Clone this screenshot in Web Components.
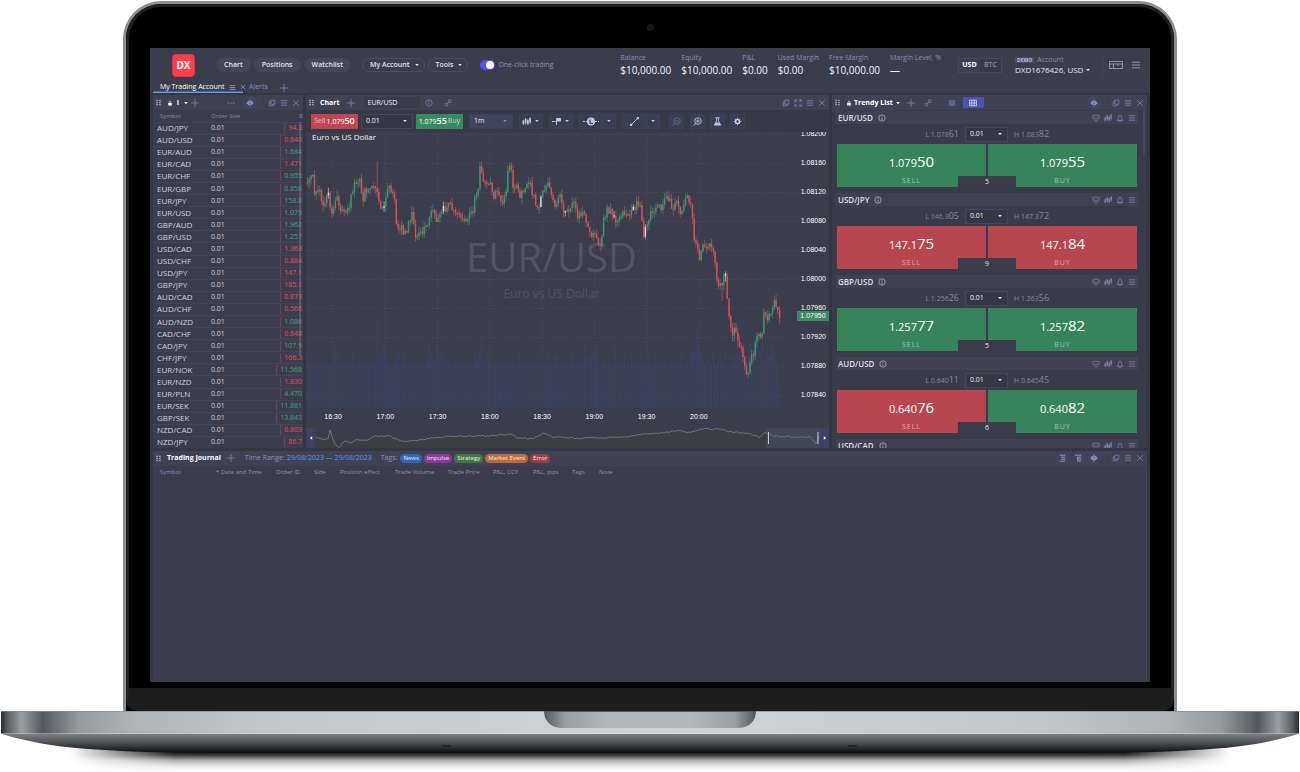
<!DOCTYPE html>
<html lang="en">
<head>
<meta charset="utf-8">
<title>Trading terminal</title>
<style>
  body { margin: 0; background: #fff; font-family: "Open Sans", "Noto Sans", sans-serif; }
</style>
</head>
<body>
<laptop-frame>
  <top-bar></top-bar>
  <work-tabs></work-tabs>
  <work-space>
    <watch-list></watch-list>
    <price-chart></price-chart>
    <trendy-list></trendy-list>
  </work-space>
  <trading-journal></trading-journal>
</laptop-frame>

<script>
const BASE = `
  *, *::before, *::after { box-sizing: border-box; }
  :host { font: 7px/10px "Open Sans", "Noto Sans", sans-serif; color: #e4e4ec; }
  button, select, input { font: inherit; color: inherit; margin: 0; padding: 0; border: 0; background: none; border-radius: 0; appearance: none; }
  button { display: inline-flex; align-items: center; justify-content: center; white-space: nowrap; cursor: pointer; }
  a { color: inherit; text-decoration: none; }
`;
const define = (name, html, setup) => {
  const tpl = document.createElement('template');
  customElements.define(name, class extends HTMLElement {
    connectedCallback() {
      if (this.shadowRoot) return;
      const root = this.attachShadow({ mode: 'open' });
      tpl.innerHTML = `<style>${BASE}</style>` + (typeof html === 'function' ? html(this) : html);
      root.append(tpl.content.cloneNode(true));
      if (setup) setup(root, this);
    }
  });
};

/* ---------- icons ---------- */
const ICONS = {
  grip: '<g fill="currentColor" stroke="none"><path d="M2 1h2v2H2zM6 1h2v2H6zM2 4h2v2H2zM6 4h2v2H6zM2 7h2v2H2zM6 7h2v2H6z"/></g>',
  lock: '<path fill="currentColor" stroke="none" d="M2 5h6v4H2z"/><path d="M3.5 5V3.5a1.5 1.5 0 0 1 3 0V5"/>',
  down: '<path fill="currentColor" stroke="none" d="M2 3.5h6L5 7z"/>',
  plus: '<path d="M5 0v10M0 5h10"/>',
  dots: '<path fill="currentColor" stroke="none" d="M1 4.5h1.5V6H1zM4.2 4.5h1.5V6H4.2zM7.5 4.5H9V6H7.5z"/>',
  eye: '<path fill="currentColor" fill-opacity=".4" d="M1 5 3.500 2.500v5zM9 5 6.500 2.500v5z"/><path d="M5 .5v9"/>',
  copy: '<path d="M3.500 1.500h5v5h-5zM3.500 3.500h-2v5h5v-2"/>',
  menu: '<path d="M1 2.200h8M1 5h8M1 7.800h8"/>',
  close: '<path d="M1.500 1.500l7 7M8.500 1.500l-7 7"/>',
  info: '<circle cx="5" cy="5" r="4"/><path d="M5 4.500V7.500M5 2.500v1"/>',
  link: '<circle cx="3" cy="7" r="1.800"/><circle cx="7.200" cy="2.800" r="1.800"/><path d="M4 6l2-2"/>',
  expand: '<path d="M1 4V1h3M6 1h3v3M9 6v3H6M4 9H1V6M1 1l2.500 2.500M9 1 6.500 3.500M9 9 6.500 6.500M1 9l2.500-2.500"/>',
  list: '<path d="M1 2.500h8M1 5h8M1 7.500h8"/>',
  grid: '<path d="M.5 1.500h9v7h-9zM.5 5h9M3.500 1.500v7M6.500 1.500v7"/>',
  candles: '<path stroke-width="1.800" d="M1.500 4v4M4 2v5M6.500 3v5M9 1v5"/><path stroke-width=".6" d="M1.500 3v6M4 1v8M6.500 2v7M9 0v8"/>',
  chartType: '<path d="M0 5h4M5 2v7"/><path fill="currentColor" stroke="none" d="M5 1h5v4H5z"/>',
  line: '<path d="M1.500 8.500l7-7"/><path fill="currentColor" stroke="none" d="M0 7.500h2.500V10H0zM7.500 0H10v2.500H7.500z"/>',
  zoomOut: '<circle cx="5.500" cy="4.500" r="3.600"/><path d="M3.500 4.500h4M3 7.200.8 9.500"/>',
  zoomIn: '<circle cx="5.500" cy="4.500" r="3.600"/><path d="M3.500 4.500h4M5.500 2.500v4M3 7.200.8 9.500"/>',
  flask: '<path d="M2.500 .8h5M4 1v3L1.500 9h7L6 4V1"/><path fill="currentColor" stroke="none" d="M3 6.200h4l1.300 2.600H1.700z"/>',
  gear: '<circle cx="5" cy="5" r="2.200" stroke-width="1.800"/><path d="M5 .8v1.500M5 7.700v1.500M.8 5h1.500M7.700 5h1.500M2 2l1 1M7 7l1 1M8 2 7 3M3 7 2 8"/>',
  shield: '<path d="M1 2.200c1.500 0 2.500-.3 4-1.200 1.500.9 2.500 1.200 4 1.200C9 5.500 7.500 8 5 9.200 2.500 8 1 5.500 1 2.200zM3.200 4.500 5 6.300l1.800-1.800"/>',
  bell: '<path d="M1 8h8M2.200 8C3.200 6.500 2.500 1.200 5 1.200S6.800 6.500 7.800 8M4 9.500h2"/>',
  card: '<path d="M.5 1.500h13v7H.5zM.5 4h13M4.500 4v4.500M9 4v2"/>',
  treeA: '<path d="M2 1.500h7M4 4h5M4 6.500h5M2 9h7"/>',
  treeB: '<path d="M1 1.500h8M4 4h5M5 6.500h4M5 9h4M4.500 4v5"/>',
  left: '<path fill="currentColor" stroke="none" d="M7 2v6L3 5z"/>',
  right: '<path fill="currentColor" stroke="none" d="M3 2v6l4-3z"/>'
};
define('ui-icon', el => `
  <style>
    :host { display: inline-flex; flex: none; width: var(--size, 8px); height: var(--size, 8px); color: inherit; }
    :host([name=card]) { width: 14px; height: 10px; }
    svg { width: 100%; height: 100%; display: block; }
  </style>
  <svg viewBox="0 0 ${el.getAttribute('name') === 'card' ? 14 : 10} 10" fill="none" stroke="currentColor" aria-hidden="true">${ICONS[el.getAttribute('name')]}</svg>`);

/* ---------- drop-down ---------- */
define('drop-down', el => `
  <style>
    :host { display: inline-flex; position: relative; height: 15px; }
    select { width: 100%; height: 100%; padding: 0 4px; border: 1px solid var(--edge, #45475e); background: var(--fill, #353744); color: #f0f0f5; }
    ui-icon { position: absolute; right: 5px; top: 50%; margin-top: -3px; --size: 6px; pointer-events: none; }
  </style>
  <select aria-label="${el.getAttribute('label')}"><option>${el.getAttribute('value')}</option></select>
  <ui-icon name="down"></ui-icon>`);

/* ---------- laptop ---------- */
define('laptop-frame', `
  <style>
    :host { display: flex; flex-direction: column; height: 100vh; min-height: 640px; overflow: hidden; }
    .lid { flex: 1; min-height: 0; display: flex; flex-direction: column; width: calc(100% - 246px); margin: 1px auto 0; border: 3px solid #8b8f92; border-bottom: 0; border-radius: 38px 38px 0 0; background: #000; }
    .bezel { flex: 1; min-height: 0; display: flex; flex-direction: column; border: 3px solid #1f2122; border-bottom: 0; border-radius: 35px 35px 12px 12px; overflow: hidden; }
    .camera { flex: none; height: 41px; display: grid; place-items: center; }
    .camera i { width: 7px; height: 7px; border-radius: 50%; background: #17181b; border: 1px solid #1d1e20; }
    .screen { flex: 1; min-height: 0; margin: 0 21px; display: flex; flex-direction: column; background: #3b3d4d; overflow: hidden; }
    .chin { flex: none; height: 29px; border-top: 6px solid #000; background: #1d1d1d; }
    .deck { flex: none; display: block; width: 100%; height: 61px; }
  </style>
  <div class="lid"><div class="bezel">
    <div class="camera"><i></i></div>
    <main class="screen"><slot></slot></main>
    <div class="chin"></div>
  </div></div>
  <svg class="deck" viewBox="0 0 1300 61" preserveAspectRatio="none" aria-hidden="true">
    <defs>
      <linearGradient id="side"><stop offset="0" stop-color="#2a2d30"/><stop offset=".005" stop-color="#5a5e61"/><stop offset=".016" stop-color="#9b9fa2"/><stop offset=".032" stop-color="#54585c"/><stop offset=".06" stop-color="#979a9d"/><stop offset=".1" stop-color="#b0b3b6"/><stop offset=".2" stop-color="#c3c7ca"/><stop offset=".5" stop-color="#d0d4d7"/><stop offset=".8" stop-color="#c3c7ca"/><stop offset=".9" stop-color="#b0b3b6"/><stop offset=".94" stop-color="#979a9d"/><stop offset=".968" stop-color="#54585c"/><stop offset=".984" stop-color="#9b9fa2"/><stop offset=".995" stop-color="#5a5e61"/><stop offset="1" stop-color="#2a2d30"/></linearGradient>
      <linearGradient id="under" x2="0" y2="1"><stop offset="0" stop-color="#7b8083"/><stop offset=".4" stop-color="#55595c"/><stop offset=".8" stop-color="#222426"/><stop offset="1" stop-color="#0a0a0a"/></linearGradient>
      <linearGradient id="shade" x2="0" y2="1"><stop offset="0" stop-color="#000"/><stop offset=".25" stop-color="#000" stop-opacity=".8"/><stop offset=".5" stop-color="#000" stop-opacity=".3"/><stop offset=".75" stop-color="#000" stop-opacity=".08"/><stop offset="1" stop-color="#000" stop-opacity="0"/></linearGradient>
      <linearGradient id="fade"><stop offset="0" stop-color="#000"/><stop offset=".09" stop-color="#fff"/><stop offset=".91" stop-color="#fff"/><stop offset="1" stop-color="#000"/></linearGradient>
      <mask id="m"><rect x="70" y="38" width="1160" height="23" fill="url(#fade)"/></mask>
      <linearGradient id="notch"><stop offset="0" stop-color="#55585b"/><stop offset=".1" stop-color="#9b9ea1"/><stop offset=".3" stop-color="#b4b7ba"/><stop offset=".7" stop-color="#b4b7ba"/><stop offset=".9" stop-color="#9b9ea1"/><stop offset="1" stop-color="#55585b"/></linearGradient>
    </defs>
    <rect x="70" y="38" width="1160" height="23" fill="url(#shade)" mask="url(#m)"/>
    <path d="M2 23H1298C1272 31 1240 37 1195 39C1150 42 1100 42 1040 42H260C200 42 150 42 105 39C60 37 28 31 2 23z" fill="url(#under)"/>
    <rect x="1" y="0" width="1298" height="23" fill="url(#side)"/>
    <path d="M1 22.500H1299" stroke="#d5d9dc" stroke-opacity=".45"/>
    <path d="M1 .5H1299" stroke="#8a8d90" stroke-opacity=".7"/>
    <path d="M544 0H756C756 10 749 17 738 17H562C551 17 544 10 544 0z" fill="url(#notch)"/>
    <path d="M544 .5H756" stroke="#55585b"/>
    <path d="M442 35h9M848 35h9" stroke="#1d1f20" stroke-width="2" opacity=".7"/>
  </svg>`);

/* ---------- top bar ---------- */
define('account-stat', el => `
  <style>
    :host { display: flex; flex-direction: column; flex: none; white-space: nowrap; }
    dt, dd { margin: 0; } dl { margin: 0; }
    dt { color: #8c8cb8; }
    dd { font-size: 10px; line-height: 15px; color: #f4f4f8; }
  </style>
  <dl><dt>${el.getAttribute('label')}</dt><dd>${el.getAttribute('value')}</dd></dl>`);

define('top-bar', `
  <style>
    :host { flex: none; display: flex; align-items: center; height: 34px; padding: 0 9px 0 22px; white-space: nowrap; }
    .logo { width: 23px; height: 23px; border-radius: 4px; background: #fb3f4c; border: 1px solid #dc3543; font-size: 10px; font-weight: 700; color: #fff; display: grid; place-items: center; margin-right: 21px; }
    nav { display: flex; gap: 3px; margin-right: 11px; }
    nav a { height: 14px; line-height: 13px; padding: 0 8px; border-radius: 7px; background: #44465a; font-weight: 600; }
    .menus { display: flex; gap: 3px; margin-right: 12px; }
    .menus button { height: 14px; padding: 0 4px 0 7px; gap: 4px; border: 1px solid #4c4e63; border-radius: 7px; font-weight: 600; --size: 6px; }
    label { display: flex; align-items: center; gap: 3px; color: #9090bc; }
    label input { width: 15px; height: 10px; border-radius: 5px; background: #5058ee; display: flex; align-items: center; justify-content: flex-end; padding: 0 1px; }
    label input::before { content: ""; width: 8px; height: 8px; border-radius: 50%; background: #fff; }
    .stats { display: flex; gap: 10px; margin-left: auto; margin-right: 17px; }
    .ccy { display: flex; border: 1px solid #454864; height: 15px; }
    .ccy button { width: 21px; background: #373946; color: #8888b8; font-weight: 600; }
    .ccy button:first-child { background: #3d3f50; color: #fff; font-weight: 700; }
    .account { margin-left: 13px; width: 88px; border-right: 1px solid #434558; }
    .account div { display: flex; align-items: center; gap: 3px; color: #8c8cb8; }
    .account b { font-size: 5px; line-height: 6px; padding: 0 2px; background: #4b4e70; color: #b9bbe0; }
    .account button { font-size: 8px; gap: 2px; --size: 6px; line-height: 10px; }
    .end { display: flex; gap: 8px; margin-left: 6px; color: #8c8cb4; --size: 10px; }
  </style>
  <a class="logo" href="#home">DX</a>
  <nav><a href="#chart">Chart</a><a href="#positions">Positions</a><a href="#watchlist">Watchlist</a></nav>
  <div class="menus"><button>My Account <ui-icon name="down"></ui-icon></button><button>Tools <ui-icon name="down"></ui-icon></button></div>
  <label><input type="checkbox" checked>One-click trading</label>
  <div class="stats">
    <account-stat label="Balance" value="$10,000.00"></account-stat>
    <account-stat label="Equity" value="$10,000.00"></account-stat>
    <account-stat label="P&amp;L" value="$0.00"></account-stat>
    <account-stat label="Used Margin" value="$0.00"></account-stat>
    <account-stat label="Free Margin" value="$10,000.00"></account-stat>
    <account-stat label="Margin Level, %" value="—"></account-stat>
  </div>
  <div class="ccy"><button>USD</button><button>BTC</button></div>
  <div class="account"><div><b>DEMO</b>Account</div><button>DXD1676426, USD <ui-icon name="down"></ui-icon></button></div>
  <div class="end"><button aria-label="Layouts"><ui-icon name="card"></ui-icon></button><button aria-label="Menu"><ui-icon name="menu"></ui-icon></button></div>`);

define('work-tabs', `
  <style>
    :host { flex: none; display: flex; height: 11px; padding-left: 3px; color: #8c8cc0; white-space: nowrap; }
    .on { display: flex; align-items: center; gap: 4px; width: 90px; padding-left: 7px; border-bottom: 1px solid #5a9ff0; box-shadow: inset 0 -1px #47699f; }
    .on a { color: #fff; } .on button { color: #a5a5c8; --size: 7px; } .on button + button { --size: 6px; }
    .off { margin: 0 12px 0 6px; }
  </style>
  <div class="on"><a href="#account">My Trading Account</a><button aria-label="Tab menu"><ui-icon name="menu"></ui-icon></button><button aria-label="Close tab"><ui-icon name="close"></ui-icon></button></div>
  <a class="off" href="#alerts">Alerts</a><button aria-label="Add tab"><ui-icon name="plus"></ui-icon></button>`);

define('work-space', `
  <style>
    :host { flex: 356 1 0; min-height: 0; display: grid; grid-template-columns: 150px minmax(0, 1fr) 315px; grid-template-rows: minmax(0, 1fr); gap: 3px; padding: 2px 3px 0; background: #343643; }
  </style><slot></slot>`);

/* ---------- panel with header bar ---------- */
define('panel-frame', `
  <style>
    :host { display: flex; flex-direction: column; min-width: 0; min-height: 0; height: 100%; background: #3b3d4d; overflow: hidden; }
    header { flex: none; display: flex; align-items: center; height: 15px; background: #404253; padding: 0 3px 0 1px; color: #8080ac; white-space: nowrap; }
    .body { flex: 1; min-height: 0; display: flex; flex-direction: column; }
    .grip { display: inline-flex; color: #b8b8c8; margin: 0 5px 0 1px; --size: 7px; }
    .tools { display: flex; margin-left: auto; align-items: center; }
    .win { display: flex; gap: 4px; padding-left: 4px; border-left: 1px solid #393b49; }
  </style>
  <header><span class="grip"><ui-icon name="grip"></ui-icon></span><slot name="lead"></slot>
    <div class="tools"><slot name="tools"></slot><div class="win"><button aria-label="Detach"><ui-icon name="copy"></ui-icon></button><slot name="win"></slot><button aria-label="Panel menu"><ui-icon name="menu"></ui-icon></button><button aria-label="Close panel"><ui-icon name="close"></ui-icon></button></div></div>
  </header>
  <div class="body"><slot></slot></div>`);
const LEAD = `
  .lead { display: flex; align-items: center; height: 15px; }
  .title { color: #fff; font-weight: 700; gap: 2px; --size: 6px; }
  .eye { width: 12px; height: 11px; background: #41456a80; color: #a8a8d0; }
`;

/* ---------- watch list ---------- */
const QUOTES = `AUD/JPY 94.3 d,AUD/USD 0.640 d,EUR/AUD 1.684 u,EUR/CAD 1.471 d,EUR/CHF 0.955 u,EUR/GBP 0.858 u,EUR/JPY 158.8 u,EUR/USD 1.079 u,GBP/AUD 1.962 u,GBP/USD 1.257 u,USD/CAD 1.363 d,USD/CHF 0.884 d,USD/JPY 147.1 d,GBP/JPY 185.1 d,AUD/CAD 0.873 d,AUD/CHF 0.566 d,AUD/NZD 1.086 u,CAD/CHF 0.648 d,CAD/JPY 107.9 u,CHF/JPY 166.3 d,EUR/NOK 11.568 u,EUR/NZD 1.830 d,EUR/PLN 4.470 u,EUR/SEK 11.881 u,GBP/SEK 13.843 u,NZD/CAD 0.803 d,NZD/JPY 86.7 d`.split(',').map(r => r.split(' '));
define('watch-list', () => `
  <style>
    ${LEAD}
    :host { min-width: 0; min-height: 0; }
    .wrap { flex: 1; min-height: 0; position: relative; }
    table { width: 100%; height: 100%; border-collapse: collapse; table-layout: fixed; }
    th { height: 12px; padding: 0; font-size: 6px; font-weight: 400; text-align: left; color: #8484b4; }
    td { padding: 0; line-height: 10px; border-top: 1px solid #434556; color: #d0d0d8; }
    td:first-child, th:first-child { width: 58px; }
    td:first-child { padding-left: 4px; font-size: 8px; } th:first-child { padding-left: 7px; }
    td:last-child, th:last-child { width: 34px; text-align: right; }
    td span { display: block; width: fit-content; margin-left: auto; line-height: 10px; border-left: 1px solid #6a4356; box-shadow: inset 0 0 0 1px #50405080; padding: 0 1px 0 3px; }
    .u { color: #41a37d; } .d { color: #e0505c; }
    .bar { position: absolute; right: 2px; top: 12px; width: 2px; height: 69%; background: #8084a0; opacity: .4; }
  </style>
  <panel-frame>
    <div slot="lead" class="lead"><button class="title"><ui-icon name="lock"></ui-icon>&nbsp;I&nbsp;<ui-icon name="down"></ui-icon></button><button aria-label="Add symbol" style="margin-left:2px"><ui-icon name="plus"></ui-icon></button></div>
    <div slot="tools" class="lead" style="gap:9px;margin-right:7px"><button aria-label="More"><ui-icon name="dots"></ui-icon></button><button class="eye" aria-label="Columns"><ui-icon name="eye"></ui-icon></button></div>
    <div class="wrap">
      <table><thead><tr><th>Symbol</th><th>Order Size</th><th>B</th></tr></thead>
      <tbody>${QUOTES.map(([s, p, c]) => `<tr><td>${s}</td><td>0.01</td><td><span class="${c}">${p}</span></td></tr>`).join('')}</tbody></table>
      <div class="bar"></div>
    </div>
  </panel-frame>`);

/* ---------- price chart ---------- */
const PATH = [[1,50],[5,43],[7,47],[9,63],[14,55],[17,76],[22,56],[25,80],[31,66],[35,81],[42,78],[45,65],[49,50],[53,45],[57,71],[59,55],[62,61],[67,53],[71,61],[75,78],[79,75],[82,56],[88,58],[91,98],[96,96],[98,105],[106,81],[109,105],[114,103],[121,96],[126,76],[131,91],[136,75],[139,77],[144,73],[151,81],[161,88],[164,78],[168,76],[169,63],[172,62],[174,36],[177,50],[184,48],[187,70],[191,55],[194,70],[199,65],[202,41],[205,31],[207,55],[211,51],[213,66],[219,58],[224,50],[231,78],[237,61],[242,53],[248,75],[254,65],[259,81],[269,70],[271,85],[277,80],[286,108],[288,98],[295,115],[298,85],[302,78],[306,81],[312,90],[316,78],[321,85],[333,70],[336,85],[338,104],[344,83],[352,70],[355,80],[361,63],[366,75],[371,70],[374,81],[381,66],[385,70],[388,105],[393,126],[397,115],[404,110],[409,128],[411,150],[415,153],[419,141],[422,175],[427,208],[429,195],[434,215],[437,225],[441,246],[443,231],[448,221],[452,198],[455,211],[458,181],[462,188],[469,170],[473,183]];
const rnd = n => { const v = Math.sin(n * 127.1 + 11.7) * 43758.5453; return v - Math.floor(v); };
const at = x => {
  for (let i = 1; i < PATH.length; i++) if (x <= PATH[i][0]) {
    const [a, b] = PATH[i - 1], [c, d] = PATH[i];
    return b + (d - b) * (x - a) / (c - a);
  }
  return PATH[PATH.length - 1][1];
};
const f = n => n.toFixed(1);
const COL = { u: '#3a9a6c', d: '#d8505a', w: '#d5d5dc' };
function candles() {
  const step = 1.742, d = { u: ['', ''], d: ['', ''], w: ['', ''] };
  let open = at(1), out = '', vol = '';
  for (let i = 0; i < 272; i++) {
    const x = 1.5 + i * step;
    let close = at(x) + (rnd(i) - .5) * 8;
    const k = rnd(i + 900) > .955 ? 'w' : close < open ? 'u' : 'd';
    let top = Math.min(open, close), bot = Math.max(open, close);
    if (bot - top < 1.5) bot = top + 1.5;
    let hi = top - rnd(i + 300) * 6, lo = bot + rnd(i + 600) * 6;
    if (i === 40) hi = 29;
    if (i === 238) lo = 169;
    d[k][0] += `M${f(x)} ${f(top)}V${f(bot)}`;
    d[k][1] += `M${f(x)} ${f(hi)}V${f(lo)}`;
    open = close;
    let h = 42 + rnd(i + 77) * rnd(i + 33) * 24;
    for (const [c, a, w] of [[76, 16, 8], [131, 18, 10], [176, 16, 8], [286, 16, 6], [391, 26, 8], [450, 22, 28]]) h += a * Math.max(0, 1 - Math.abs(x - c) / w) * (.5 + rnd(i + 5) / 2);
    if (i === 40) h = 91;
    if (i > 269) h = 21;
    vol += `M${f(x)} 276V${f(276 - h)}`;
  }
  for (const k in d) out += `<path d="${d[k][1]}" stroke="${COL[k]}" stroke-width=".8" opacity=".8"/><path d="${d[k][0]}" stroke="${COL[k]}" stroke-width="1.4"/>`;
  return `<path d="${vol}" stroke="#3d4364" stroke-width="1.200" opacity=".75"/>` + out;
}
function gridLines() {
  let s = '';
  for (let y = 2; y < 276; y += 29) s += `M0 ${y}.5H491`;
  for (let i = 0; i < 8; i++) s += `M${f(27.2 + i * 52.25)} 2V276`;
  return `<path d="${s}" stroke="#4b4d5e" stroke-dasharray="1 2" stroke-width="1"/>`;
}
const MINI = [[0,8],[6,10],[13,10],[15,1],[17,7],[20,15],[24,19],[27,15],[30,12],[35,14],[40,11],[52,11],[61,7],[75,7],[85,12],[98,12],[118,9],[142,7],[172,7],[195,5],[203,9],[218,10],[229,4],[238,8],[250,8],[265,10],[270,8],[285,9],[312,8],[325,5],[335,5],[352,3],[362,2],[375,3],[388,0],[405,0],[412,2],[425,4],[435,5],[445,8],[450,3],[458,7],[478,8],[495,8],[501,15],[504,7]];
function mini() {
  let p = '';
  for (let i = 1; i < MINI.length; i++) {
    const [a, b] = MINI[i - 1], [c, e] = MINI[i];
    for (let x = a; x < c; x += 2) p += `L${x} ${f(b + (e - b) * (x - a) / (c - a) + (rnd(x + 40) - .5) * 1.4 + 1)}`;
  }
  return `<path d="M0 20${p}L504 8V20z" fill="#3b3e42"/><path d="M${p.slice(1)}L504 8" stroke="#7c8078" stroke-width=".8" fill="none"/>`;
}
define('price-chart', () => `
  <style>
    ${LEAD}
    :host { min-width: 0; min-height: 0; }
    .sym { width: 56px; height: 11px; padding: 0 3px; border: 1px solid #383a48; background: #3a3c4b; color: #f0f0f4; }
    .bar { flex: none; display: flex; align-items: center; height: 22px; padding-left: 5px; background: #373946; white-space: nowrap; }
    .bar button { height: 15px; background: #40446080; border: 1px solid #3c4058; color: #c4c6dc; --size: 9px; }
    .bar button.sell, .bar button.buy { width: 47px; border: 0; color: #fff; gap: 1px; }
    .bar button.sell { background: #be4652; } .bar button.buy { background: #388a61; }
    .sell small, .buy small { font-size: 7px; opacity: .65; }
    .num { display: inline-flex; align-items: baseline; } .num b { font-size: 9px; font-weight: 600; } 
    .dd { --size: 6px; display: inline-flex; margin-left: 3px; }
    .plot { flex: 1; min-height: 0; display: grid; grid-template-columns: minmax(0, 1fr) 32px; grid-template-rows: minmax(0, 1fr) 20px 20px; position: relative; overflow: hidden; }
    svg { display: block; width: 100%; height: 100%; }
    .canvas { position: relative; min-height: 0; }
    .name { position: absolute; left: 6px; top: 0; font-size: 8px; color: #f2f2f6; }
    .mark { position: absolute; inset: 0; display: flex; flex-direction: column; align-items: center; padding-top: 98px; color: #525465; white-space: nowrap; }
    .mark b { font-size: 40px; line-height: 54px; font-weight: 400; } .mark span { font-size: 12px; line-height: 16px; margin-top: 2px; }
    .prices { grid-row: 1 / 3; grid-column: 2; min-height: 0; font: 7px/10px "Liberation Sans", Arial, sans-serif; color: #fff; text-align: right; padding-right: 3px; margin-top: -3px; }
    .prices div { height: 29px; white-space: nowrap; }
    .now { position: absolute; right: 0; top: 179px; width: 32px; height: 10px; background: #388a61; color: #fff; font: 7px/10px "Liberation Sans", Arial, sans-serif; text-align: center; }
    .times { grid-row: 2; grid-column: 1; display: flex; padding: 4px 72px 0 1px; font: 7px/10px "Liberation Sans", Arial, sans-serif; color: #fff; }
    .times span { flex: 1; text-align: center; }
    .nav { grid-row: 3; grid-column: 1 / -1; display: flex; height: 20px; }
    .nav button { width: 9px; background: #3d4262; color: #fff; --size: 6px; }
    .nav div { flex: 1; min-width: 0; }
  </style>
  <panel-frame>
    <div slot="lead" class="lead"><b class="title" style="margin-right:7px">Chart</b><button aria-label="Add chart"><ui-icon name="plus"></ui-icon></button><input class="sym" aria-label="Symbol" value="EUR/USD" style="margin:0 5px 0 9px"><button aria-label="Info" style="margin-right:11px"><ui-icon name="info"></ui-icon></button><button aria-label="Link"><ui-icon name="link"></ui-icon></button></div>
    <button slot="win" aria-label="Full screen"><ui-icon name="expand"></ui-icon></button>
    <div class="bar">
      <button class="sell"><small>Sell</small> <span class="num">1.079<b>50</b></span></button>
      <drop-down label="Order size" value="0.01" style="width:52px;margin:0 3px"></drop-down>
      <button class="buy"><span class="num">1.079<b>55</b></span> <small>Buy</small></button>
      <drop-down label="Interval" value="1m" style="width:44px;margin:0 6px;--fill:#40445f;--edge:#3c4058;color:#8284a0"></drop-down>
      <button style="width:24px" aria-label="Chart type"><ui-icon name="candles"></ui-icon><span class="dd"><ui-icon name="down"></ui-icon></span></button>
      <button style="width:24px;margin-left:6px" aria-label="Scale"><ui-icon name="chartType"></ui-icon><span class="dd"><ui-icon name="down"></ui-icon></span></button>
      <button style="width:23px;margin-left:6px" aria-label="Levels"><svg style="width:16px;height:9px" viewBox="0 0 16 9" fill="none"><path d="M0 4.500h16" stroke="currentColor" stroke-dasharray="2 1"/><circle cx="8" cy="4.500" r="4" fill="currentColor"/><path d="M7 2.500v4h3" stroke="#40445f" stroke-width="1.200"/></svg></button>
      <button style="width:14px" aria-label="Level options"><span style="--size:6px;display:flex"><ui-icon name="down"></ui-icon></span></button>
      <button style="width:24px;margin-left:6px" aria-label="Draw line"><ui-icon name="line"></ui-icon></button>
      <button style="width:14px" aria-label="Drawing options"><span style="--size:6px;display:flex"><ui-icon name="down"></ui-icon></span></button>
      <button style="width:15px;margin-left:9px;color:#686a8a" aria-label="Zoom out"><ui-icon name="zoomOut"></ui-icon></button>
      <button style="width:15px;margin-left:6px" aria-label="Zoom in"><ui-icon name="zoomIn"></ui-icon></button>
      <button style="width:15px;margin-left:5px" aria-label="Studies"><ui-icon name="flask"></ui-icon></button>
      <button style="width:15px;margin-left:5px" aria-label="Settings"><ui-icon name="gear"></ui-icon></button>
    </div>
    <div class="plot">
      <div class="canvas">
        <div class="mark"><b>EUR/USD</b><span>Euro vs US Dollar</span></div>
        <svg style="position:relative" viewBox="0 0 491 276" preserveAspectRatio="none" fill="none" aria-hidden="true">${gridLines()}${candles()}</svg>
        <div class="name">Euro vs US Dollar</div>
      </div>
      <div class="prices">${['1.08200','1.08160','1.08120','1.08080','1.08040','1.08000','1.07960','1.07920','1.07880','1.07840'].map(p => `<div>${p}</div>`).join('')}</div>
      <div class="times">${['16:30','17:00','17:30','18:00','18:30','19:00','19:30','20:00'].map(t => `<span>${t}</span>`).join('')}</div>
      <div class="now">1.07950</div>
      <div class="nav">
        <button aria-label="Scroll left"><ui-icon name="left"></ui-icon></button>
        <div><svg viewBox="0 0 505 20" preserveAspectRatio="none" aria-hidden="true">${mini()}<rect x="451" width="54" height="20" fill="#5a649a" opacity=".22"/><path d="M453.500 4v12M503 4v12" stroke="#c8c8d8"/></svg></div>
        <button aria-label="Scroll right"><ui-icon name="right"></ui-icon></button>
      </div>
    </div>
  </panel-frame>`);

/* ---------- quote tiles ---------- */
const split = (v, n = 2) => `${v.slice(0, -n)}<b>${v.slice(-n)}</b>`;
define('price-tile', el => {
  const a = n => el.getAttribute(n) || '';
  return `
  <style>
    :host { display: block; flex: none; height: 82px; }
    header { display: flex; align-items: center; height: 13px; padding: 0 2px; background: #404253; gap: 5px; color: #8080b0; }
    header b { font-size: 8px; font-weight: 600; color: #dcdce4; } header b + ui-icon { color: #b0b0c4; }
    header div { display: flex; gap: 4px; margin-left: auto; }
    .range { display: grid; grid-template-columns: 1fr 43px 1fr; gap: 6px; align-items: center; height: 20px; color: #85879b; padding: 0 2px 0 1px; }
    .range span:first-child { text-align: right; }
    .range b { font-weight: 400; font-size: 9px; }
    .pair { display: grid; grid-template-columns: 1fr 1fr; gap: 2px; height: 43px; position: relative; padding: 0 1px; }
    .pair button { flex-direction: column; justify-content: flex-start; background: #37845c; color: #fff; font-size: 11px; line-height: 18px; padding-top: 8px; }
    .pair button.d { background: #b84650; }
    .pair .v b { font-size: 15px; font-weight: 400; }
    .pair small { font-size: 7px; line-height: 10px; margin-top: 4px; letter-spacing: 1px; color: #ffffff80; }
    .pair output { position: absolute; left: 50%; bottom: 0; width: 58px; margin-left: -29px; height: 11px; line-height: 12px; background: #3a3c4b; text-align: center; }
  </style>
  <header><b>${a('pair')}</b><ui-icon name="info"></ui-icon><div><button aria-label="Depth"><ui-icon name="shield"></ui-icon></button><button aria-label="Chart"><ui-icon name="candles"></ui-icon></button><button aria-label="Alert"><ui-icon name="bell"></ui-icon></button><button aria-label="Menu"><ui-icon name="menu"></ui-icon></button></div></header>
  ${a('sell') && `<div class="range"><span>L ${split(a('low'))}</span><drop-down label="Order size ${a('pair')}" value="0.01"></drop-down><span>H ${split(a('high'))}</span></div>
  <div class="pair"><button class="${a('sc')}"><span class="v">${split(a('sell'))}</span><small>SELL</small></button><button class="${a('bc')}"><span class="v">${split(a('buy'))}</span><small>BUY</small></button><output>${a('spread')}</output></div>`}`;
});
define('trendy-list', `
  <style>
    ${LEAD}
    :host { min-width: 0; min-height: 0; }
    .tiles { flex: 1; min-height: 0; overflow: hidden; position: relative; background: #393b49; padding: 1px 9px 0 4px; display: flex; flex-direction: column; }
    .view { display: flex; margin-left: 10px; }
    .view button { width: 21px; height: 11px; background: #3e4158; color: #8c8cc0; } .view .on { background: #4c54b0; color: #dfe0f8; }
    .thumb { position: absolute; right: 2px; top: 0; width: 2px; height: 44px; background: #484a5c; }
  </style>
  <panel-frame>
    <div slot="lead" class="lead"><button class="title"><ui-icon name="lock"></ui-icon>Trendy List<ui-icon name="down"></ui-icon></button><button aria-label="Add" style="margin:0 9px 0 6px"><ui-icon name="plus"></ui-icon></button><button aria-label="Link"><ui-icon name="link"></ui-icon></button><div class="view"><button aria-label="List view"><ui-icon name="list"></ui-icon></button><button class="on" aria-label="Grid view"><ui-icon name="grid"></ui-icon></button></div></div>
    <div slot="tools" class="lead" style="margin-right:7px"><button class="eye" aria-label="Columns"><ui-icon name="eye"></ui-icon></button></div>
    <div class="tiles">
      <price-tile pair="EUR/USD" low="1.07861" high="1.08382" sell="1.07950" buy="1.07955" spread="5"></price-tile>
      <price-tile pair="USD/JPY" low="146.305" high="147.372" sell="147.175" buy="147.184" spread="9" sc="d" bc="d"></price-tile>
      <price-tile pair="GBP/USD" low="1.25626" high="1.26356" sell="1.25777" buy="1.25782" spread="5"></price-tile>
      <price-tile pair="AUD/USD" low="0.64011" high="0.64545" sell="0.64076" buy="0.64082" spread="6" sc="d"></price-tile>
      <price-tile pair="USD/CAD"></price-tile>
      <div class="thumb"></div>
    </div>
  </panel-frame>`);

/* ---------- journal ---------- */
define('tag-pill', `
  <style>:host { display: inline-block; height: 9px; line-height: 9px; padding: 0 3px; border-radius: 5px; font-size: 6px; color: #f0f0f5; background: var(--tone); }</style><slot></slot>`);
define('trading-journal', `
  <style>
    ${LEAD}
    :host { flex: 233 1 0; min-height: 0; display: block; padding: 3px 3px 0; background: #343643; }
    .lead a { color: #5a98ee; }
    .tags { display: flex; gap: 2px; margin-left: 3px; }
    table { width: 100%; border-collapse: collapse; table-layout: fixed; }
    th { height: 12px; padding: 0; font-size: 6px; line-height: 8px; font-weight: 400; text-align: left; color: #9090b8; white-space: nowrap; }
    th:first-child { padding-left: 7px; }
    th ui-icon { --size: 5px; margin-right: 1px; }
    .list { flex: 1; border-right: 1px solid #474959; }
  </style>
  <panel-frame>
    <div slot="lead" class="lead"><b class="title" style="margin-right:6px">Trading Journal</b><button aria-label="Add journal" style="margin-right:10px"><ui-icon name="plus"></ui-icon></button><span style="margin-right:2px;color:#9090b8">Time Range:</span><a href="#range">29/08/2023 — 29/08/2023</a><span style="margin-left:9px;color:#9090b8">Tags:</span>
      <div class="tags"><tag-pill style="--tone:#2f66b8">News</tag-pill><tag-pill style="--tone:#8a3a9c">Impulse</tag-pill><tag-pill style="--tone:#3d7a44">Strategy</tag-pill><tag-pill style="--tone:#bd6a3a">Market Event</tag-pill><tag-pill style="--tone:#9c4048">Error</tag-pill></div></div>
    <div slot="tools" class="lead" style="gap:4px;margin-right:7px"><button class="eye" aria-label="Group"><ui-icon name="treeA"></ui-icon></button><button class="eye" aria-label="Tree"><ui-icon name="treeB"></ui-icon></button><button class="eye" aria-label="Columns"><ui-icon name="eye"></ui-icon></button></div>
    <div class="list"><table>
      <colgroup><col style="width:62px"><col style="width:61px"><col style="width:38px"><col style="width:26px"><col style="width:55px"><col style="width:53px"><col style="width:45px"><col style="width:40px"><col style="width:39px"><col style="width:27px"><col></colgroup>
      <thead><tr><th>Symbol</th><th><ui-icon name="down"></ui-icon>Date and Time</th><th>Order ID</th><th>Side</th><th>Position effect</th><th>Trade Volume</th><th>Trade Price</th><th>P&amp;L, CCY</th><th>P&amp;L, pips</th><th>Tags</th><th>Note</th></tr></thead>
    </table></div>
  </panel-frame>`);
</script>
</body>
</html>
